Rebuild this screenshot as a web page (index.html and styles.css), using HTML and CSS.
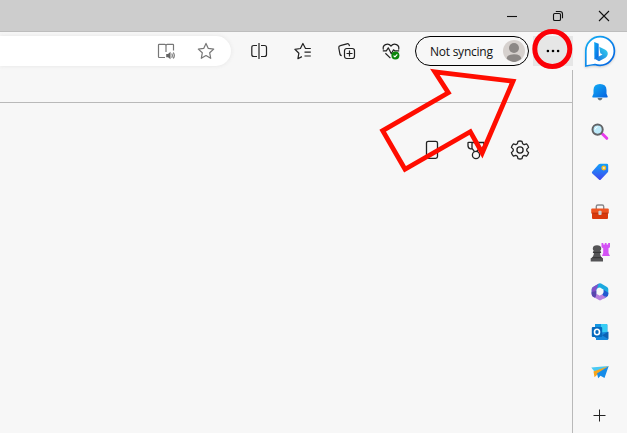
FILE: index.html
```html
<!DOCTYPE html>
<html lang="en">
<head>
    <meta charset="UTF-8">
    <title>Browser settings menu</title>
    <link rel="stylesheet" href="styles.css">
</head>
<body>
    <div class="titlebar">
        <svg class="win" viewBox="0 0 12 12"><path d="M1 6.5h10"/></svg>
        <svg class="win" viewBox="0 0 12 12"><rect x="1.5" y="3.5" width="7" height="7" rx="1.3"/><path d="M3.8 1.5h4.2q2.5 0 2.5 2.5v4.2"/></svg>
        <svg class="win" viewBox="0 0 12 12"><path d="M1 1l10 10M11 1L1 11"/></svg>
    </div>
    <div class="window">
        <div class="main">
            <div class="toolbar">
                <div class="address">
                    <svg class="icon gray" viewBox="0 0 20 20"><path d="M9 16.5H3.2q-.7 0-.7-.7V4q0-.7.7-.7h5.6q1.2 0 1.2 1.2 0-1.2 1.2-1.2h5.6q.7 0 .7.7v5.5M10 4.5V11"/><path class="solid" d="M10.2 13h1.8l2.5-2.3v7.6L12 16.2h-1.8z"/><path d="M15.7 12.5q1.2 2 0 4.3M17.3 11.5q2 3 0 6"/></svg>
                    <svg class="icon gray" viewBox="0 0 20 20"><path d="M10 2.4l2.3 5 5.4.7-4 3.7 1 5.5-4.7-2.7-4.7 2.7 1-5.5-4-3.7 5.4-.7z"/></svg>
                </div>
                <div class="tools">
                    <svg class="icon" viewBox="0 0 20 20"><path d="M8 4.5H4.8q-2 0-2 2v7q0 2 2 2H8M12 4.5h3.5q2 0 2 2v7q0 2-2 2H12"/><path d="M10 2v16" class="divider"/></svg>
                    <svg class="icon" viewBox="0 0 20 20"><path d="M17.8 7.5h-5.3l-2.6-5-2.5 5-5.5.8 4 3.9-1 5.5 4-2.1M11.5 11.2h6.3M11.5 15h6.3"/></svg>
                    <svg class="icon" viewBox="0 0 20 20"><path d="M4.7 14.7q-1.500-.3-1.800-1.700L1.800 6.800q-.3-1.800 1.500-2.200l6.600-1.800q1.700-.4 2.300 1.200l.3 1.100"/><rect x="7.500" y="7.500" width="10" height="10" rx="2.200"/><path d="M12.500 9.500v6M9.500 12.500h6"/></svg>
                    <svg class="icon" viewBox="0 0 20 20"><path d="M2.4 8.7C1 4 6.8 1.2 10 5c3.2-3.8 9-1 7.6 3.7M1.8 9.8h3.5l2-3 3 6 2.2-4 1.1 1h4.6M4.4 12.3l5 4.8"/><circle cx="14.4" cy="14.6" r="4" class="ok"/><path d="M12.6 14.6l1.3 1.3 2.4-2.5" class="tick"/></svg>
                </div>
                <div class="profile">
                    <span>Not syncing</span>
                    <svg class="avatar" viewBox="0 0 22 22"><defs><clipPath id="face"><circle cx="11" cy="11" r="11"/></clipPath></defs><circle cx="11" cy="11" r="11" fill="#d6d1ce"/><g fill="#8c8886" clip-path="url(#face)"><circle cx="11" cy="8" r="5"/><path d="M3.7 19q0-4.7 7.3-4.7t7.3 4.7L11 23z"/></g></svg>
                </div>
                <div class="more">
                    <svg viewBox="0 0 14 4"><circle cx="1.9" cy="2" r="1.3"/><circle cx="7" cy="2" r="1.3"/><circle cx="12.1" cy="2" r="1.3"/></svg>
                </div>
            </div>
            <div class="bar"></div>
            <div class="page">
                <svg class="tile" viewBox="0 0 20 20"><rect x="4.5" y="1.3" width="11" height="17" rx="1.8"/></svg>
                <svg class="tile" viewBox="0 0 20 20"><path d="M6 2.5H18M6.3 8.8H4.500q-2.500-.5-2.500-3V3q0-.7.7-.7h3.300v6l2.500 3.300M10.500 11.500l3-3h2.400l2-2.500V2.500"/><circle cx="10" cy="15" r="3.600"/></svg>
                <svg class="tile" viewBox="0 0 20 20"><path d="M8 1.3Q10 .7 12 1.3l.6 2.4 1.6.9 2.4-.7q1.4 1.5 2 3.5l-1.8 1.7v1.8l1.8 1.7q-.6 2-2 3.5l-2.4-.7-1.6.9-.6 2.4q-2 .6-4 0l-.6-2.4-1.6-.9-2.4.7q-1.4-1.5-2-3.5l1.8-1.7V9.1L1.4 7.4q.6-2 2-3.5l2.4.7 1.6-.9z"/><circle cx="10" cy="10" r="3.1"/></svg>
            </div>
        </div>
        <div class="sidebar">
            <!-- bing -->
            <svg class="bing" viewBox="0 0 32 34">
                <defs>
                    <linearGradient id="b1" x2="1" y2="1"><stop offset="0" stop-color="#12b0f5"/><stop offset="1" stop-color="#0560e0"/></linearGradient>
                    <linearGradient id="b2" x1="1" y1="0" x2="0" y2="1"><stop offset="0" stop-color="#35d8ee"/><stop offset="1" stop-color="#1469df"/></linearGradient>
                </defs>
                <path d="M1.8 31V16A14.3 14.3 0 1 1 16 30.3Q13.5 30.3 11 29.5 7 30 1.8 31z" fill="#fff" stroke="url(#b1)" stroke-width="1.7"/>
                <path d="M15.200 11.800l5.700 2.700q3.400 1.900 2.800 5-.4 2-2.200 3.200l-6.500 3.600-4.500-2.600 8-4.200-2.200-1.300z" fill="url(#b2)"/>
                <path d="M10.200 7l4.500 1.700v13.300l-4.300 2.500z" fill="url(#b1)"/>
            </svg>
            <svg class="app" viewBox="0 0 18 18">
                <path d="M6.5 15h5q-.5 2.4-2.5 2.4T6.5 15z" fill="#69747e"/>
                <path d="M2.500 7Q2.500 1 9 1t6.500 6v3.800l1.200 2.700q.2 1-.7 1H2q-.9 0-.7-1l1.200-2.700z" fill="url(#b1)"/>
            </svg>
            <svg class="app" viewBox="0 0 18 18">
                <path d="M11.500 11l4.300 4.300" stroke="#e83bed" stroke-width="3" stroke-linecap="round"/>
                <circle cx="6.600" cy="6.600" r="5.100" fill="#bdeafa" stroke="#626467" stroke-width="2"/>
                <path d="M4 6.500q.5-2.300 2.600-2.700" stroke="#fff" fill="none"/>
            </svg>
            <svg class="app" viewBox="0 0 18 18">
                <defs><linearGradient id="tag" x2="0" y2="1"><stop offset="0" stop-color="#13a2fb"/><stop offset="1" stop-color="#4146ee"/></linearGradient></defs>
                <path d="M7.500 1.600Q8.300.8 9.300.8h6.500q1.400 0 1.400 1.400v5.700q0 1-.7 1.700l-6.600 6.800q-1 1-2 0L1.300 10.500q-1-1 0-2z" fill="url(#tag)"/>
                <circle cx="12.800" cy="5" r="1.800" fill="#dfe6d0" stroke="#ffbe16" stroke-width="1.300"/>
            </svg>
            <svg class="app" viewBox="0 0 18 18">
                <path d="M5.300 6V3.500q0-1.500 1.500-1.500h4.400q1.500 0 1.500 1.500V6" fill="none" stroke="#89898c" stroke-width="1.400"/>
                <rect x="1" y="10" width="16" height="6" rx="1" fill="#d93a0d"/>
                <rect x=".2" y="5.500" width="17.600" height="5" rx="1" fill="#ee5422"/>
                <path d="M.7 10.200h16.600" stroke="#b52e09"/>
                <rect x="7.400" y="7.800" width="3.200" height="4.200" rx="1" fill="#cfd2d2"/>
            </svg>
            <svg class="app chess" viewBox="0 0 20 20">
                <path d="M11.500 1h1.800v1.400h1.500V1h1.800v1.400h1.500V1H20v4.200l-1.500 1v4.900l1.500 3h-8l1.200-3V6.200l-1.700-1z" fill="#d453f5"/>
                <path d="M3.700 8.800q-1-1-.9-2.300Q3 3.200 7 3.200t4.200 3.300q.1 1.300-.9 2.300l1 1.600-1.200.6q.2 3.100 1.500 4.500l1.400.8v3.100H.700v-3.100l1.500-.8q1.400-1.400 1.700-4.500l-1.200-.6z" fill="#545456"/>
                <path d="M3 10.400h8M2.300 15.700h9.400" stroke="#343436"/>
            </svg>
            <svg class="app" viewBox="0 0 18 18">
                <path d="M8 .5q1-.5 2.100.1L16 4q1.300.8 1.300 2.300v5L12.700 8.500V6.700L9 4.600Q5.500 5 5.200 8v3.500L.700 11V6.300Q.700 4.800 2 4z" fill="#1ca9df"/>
                <path d="M8 .5Q6.500 1.500 6.500 4L5.200 6.500v4.500l-4.500.500V6.300Q.700 4.800 2 4z" fill="#8350c9"/>
                <path d="M12.700 6.700l4.600 3v1.600q0 1.600-1.300 2.400l-3 1.700L8 13.500q4.300-1.700 4.700-5z" fill="#2159d0"/>
                <path d="M.7 11q.2 2 1.300 2.700L8 17.100q1 .6 2 0l5.800-3.300q-3 .2-4.600-2.500L9 12.800l-3.800-2z" fill="#b77fe0"/>
                <path d="M.7 9v2.300q0 1.600 1.300 2.400l2 1.100q1.500-.8 1.200-4V8z" fill="#5847ae"/>
            </svg>
            <svg class="app" viewBox="0 0 18 18">
                <rect x="4" y="1" width="12.300" height="14" rx="1" fill="#0c70c9"/>
                <path d="M4 2q0-1 1-1h5v4.500H4z" fill="#1296e2"/><path d="M10 1h5.300q1 0 1 1v8H10z" fill="#38cdf5"/>
                <path d="M5 10l12.300-1.300V16q0 1-1 1H5z" fill="#1687dc"/>
                <path d="M17.300 8.700V16L11 12.200z" fill="#0c61b3"/>
                <rect x=".8" y="4" width="10.400" height="10" rx="1" fill="#0669bd"/>
                <ellipse cx="6" cy="9" rx="2.500" ry="2.700" fill="none" stroke="#fff" stroke-width="1.600"/>
            </svg>
            <svg class="app" viewBox="0 0 18 18">
                <path d="M.3 4.500L17.700 3 4 9.300z" fill="#49c9f3"/>
                <path d="M17.700 3L2.500 8.500l1 5.800L7 11z" fill="#f7a51c"/>
                <path d="M17.700 3L6 10.500l1.200 4.800 2.300-2.500 4 2.200z" fill="#168ce8"/>
            </svg>
            <svg class="app plus" viewBox="0 0 18 18"><path d="M8.500 2.500v12M2.500 8.500h12"/></svg>
        </div>
    </div>

    <!-- red marks over the window -->
    <svg class="marks" viewBox="0 0 627 433">
        <circle cx="552.300" cy="49" r="17.500"/>
        <path d="M434.800 71.800L513 81.300 482.200 153 470.300 131.700 405 169.300 382.700 130.700 448.300 92.800z"/>
    </svg>
</body>
</html>
```
FILE: styles.css
```css
* { margin: 0; padding: 0; box-sizing: border-box; }

body {
    width: 627px; height: 433px; overflow: hidden;
    display: flex; flex-direction: column;
    position: relative;
    background-color: #f7f7f7;
    font-family: "Open Sans", "Noto Sans", sans-serif;
}
svg { display: block; flex: none; }

/* title bar */
.titlebar {
    height: 32px; padding: 0 17px 0 0;
    display: flex; justify-content: flex-end; align-items: center; gap: 34px;
    background-color: #cdcdcd;
    border-bottom: 1px solid #bdbdbd;
}
.win { width: 12px; height: 12px; fill: none; stroke: #111; stroke-width: 1.1; }

.window { flex: 1; display: flex; }
.main { width: 573px; display: flex; flex-direction: column; }

/* toolbar */
.toolbar { height: 38px; display: flex; align-items: center; }
.address {
    width: 231px; height: 30px; padding-right: 15px;
    display: flex; justify-content: flex-end; align-items: center; gap: 20px;
    background-color: #fff;
    border-radius: 0 15px 15px 0;
    box-shadow: 0 0 4px #e4e4e4;
}
.icon { width: 20px; height: 20px; fill: none; stroke: #222; stroke-width: 1.2; stroke-linejoin: round; }
.gray { stroke: #777; }
.icon .solid { fill: #666; stroke: none; }
.icon .divider { stroke: #777; stroke-width: 2; }
.icon .ok { fill: #0b860b; stroke: none; }
.icon .tick { stroke: #fff; }
.tools { padding: 0 14px 0 18px; display: flex; gap: 24px; }
.profile {
    width: 114px; height: 30px; padding: 0 3px 0 14px;
    display: flex; justify-content: space-between; align-items: center;
    border: 1px solid #000; border-radius: 15px;
    font-size: 12px; letter-spacing: -0.25px; color: #111; white-space: nowrap;
}
.avatar { width: 22px; height: 22px; }
.more {
    width: 40px; height: 30px; margin-left: 4px;
    display: flex; justify-content: center; align-items: center;
    background-color: #e6e6e6;
}
.more svg { width: 14px; height: 4px; }

.bar { height: 33px; border-right: 1px solid #b9b9b9; border-bottom: 1px solid #b9b9b9; }

/* page content */
.page {
    flex: 1; padding: 37px 42px 0 0;
    display: flex; justify-content: flex-end; gap: 24px;
    border-right: 1px solid #b9b9b9;
}
.tile { width: 20px; height: 20px; fill: none; stroke: #222; stroke-width: 1.3; stroke-linejoin: round; }

/* right sidebar */
.sidebar { flex: 1; display: flex; flex-direction: column; align-items: center; }
.bing { width: 32px; height: 34px; margin: 3px 0 14px; filter: drop-shadow(0 1px 1px #ccc); }
.app { width: 18px; height: 18px; margin-bottom: 22px; }
.chess { width: 20px; height: 20px; margin: -1px 0 21px; }
.plus { margin: 4px 0 0; fill: none; stroke: #222; }

.marks {
    position: absolute; left: 0; top: 0;
    width: 627px; height: 433px;
    fill: none; stroke: #ff0d00; stroke-width: 4.8;
}
.marks circle { stroke: #fb0007; stroke-width: 5; }
```
